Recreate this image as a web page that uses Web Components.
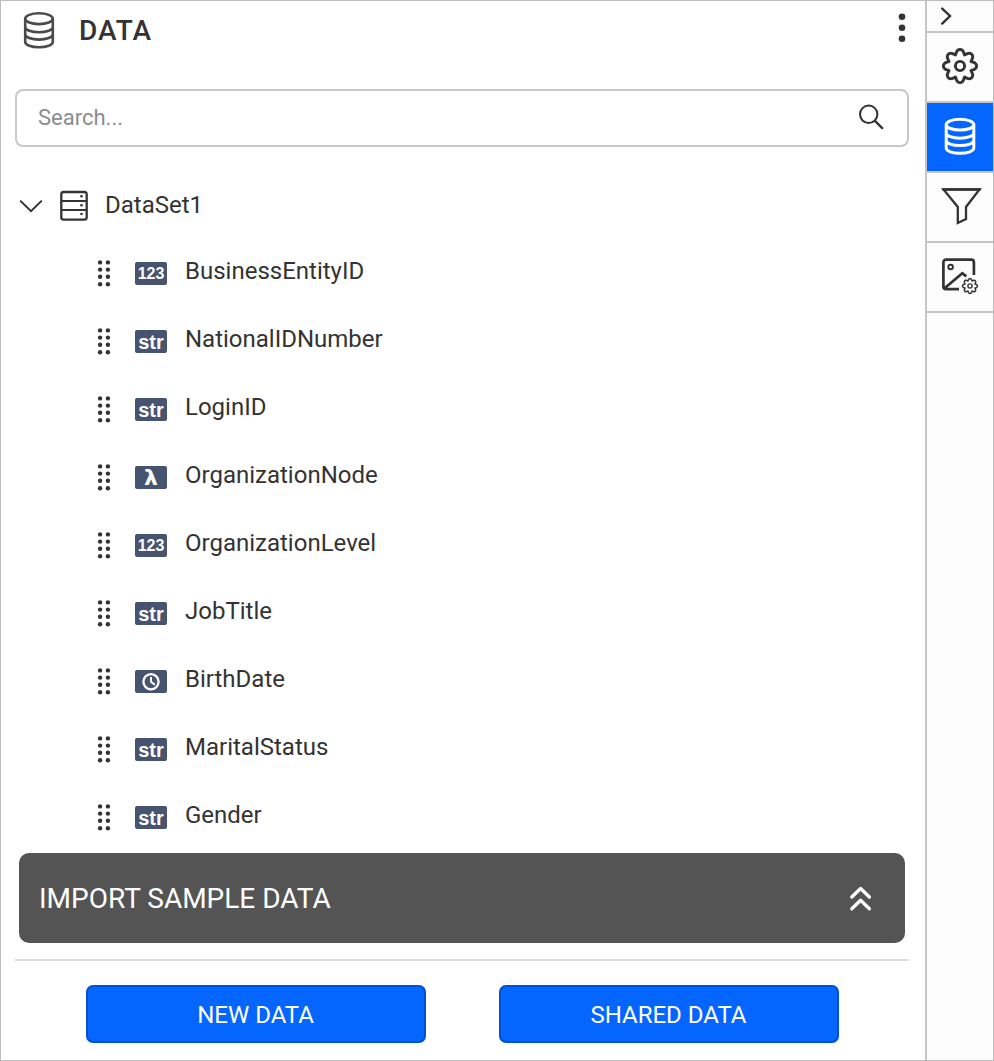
<!DOCTYPE html>
<html lang="en">
<head>
<meta charset="utf-8">
<meta name="viewport" content="width=device-width, initial-scale=1">
<title>Data</title>
<style>
  body { margin: 0; font-family: Roboto, "Liberation Sans", sans-serif; color: #333; background: #fff; }
</style>
</head>
<body>
<report-designer>
  <data-panel slot="panel">
    <panel-header>DATA</panel-header>
    <search-box placeholder="Search..."></search-box>
    <data-set name="DataSet1">
      <data-field type="number">BusinessEntityID</data-field>
      <data-field type="string">NationalIDNumber</data-field>
      <data-field type="string">LoginID</data-field>
      <data-field type="expression">OrganizationNode</data-field>
      <data-field type="number">OrganizationLevel</data-field>
      <data-field type="string">JobTitle</data-field>
      <data-field type="date">BirthDate</data-field>
      <data-field type="string">MaritalStatus</data-field>
      <data-field type="string">Gender</data-field>
    </data-set>
    <import-bar slot="footer">IMPORT SAMPLE DATA</import-bar>
    <action-bar slot="footer">
      <action-button>NEW DATA</action-button>
      <action-button>SHARED DATA</action-button>
    </action-bar>
  </data-panel>
  <tool-rail slot="rail">
    <rail-button compact icon="collapse" label="Collapse panel"></rail-button>
    <rail-button icon="gear" label="Properties"></rail-button>
    <rail-button icon="database" label="Data" active></rail-button>
    <rail-button icon="filter" label="Filters"></rail-button>
    <rail-button icon="image" label="Image manager"></rail-button>
  </tool-rail>
</report-designer>

<script>
  // Closed outline of an eight-lobed cog, centred on (cx, cy).
  function cog(cx, cy, radius, depth) {
    const points = [];
    for (let i = 0; i < 128; i++) {
      const t = (i / 128) * Math.PI * 2;
      const r = radius + depth * Math.cos(8 * t);
      const a = t + 0.055 * Math.sin(8 * t);
      points.push((cx + r * Math.sin(a)).toFixed(2) + ' ' + (cy - r * Math.cos(a)).toFixed(2));
    }
    return 'M' + points.join('L') + 'Z';
  }

  const database = (width) => `<svg width="40" height="40" viewBox="0 0 40 40" fill="none" stroke="currentColor" stroke-width="${width}" aria-hidden="true">
    <ellipse cx="20" cy="7.7" rx="13.8" ry="5.4"/>
    <path d="M6.2 7.7v23.4c0 3 6.2 5.2 13.8 5.2s13.8-2.2 13.8-5.2V7.7M6.2 15.9c0 3 6.2 5.4 13.8 5.4s13.8-2.4 13.8-5.4M6.2 23.2c0 3 6.2 5.4 13.8 5.4s13.8-2.4 13.8-5.4"/></svg>`;

  const icons = {
    database,
    collapse: `<svg width="40" height="30" viewBox="0 0 40 30" fill="none" stroke="currentColor" stroke-width="2.4" stroke-linecap="round" aria-hidden="true"><path d="M2.2 7.6 10 15l-7.8 7.6"/></svg>`,
    gear: `<svg width="40" height="40" viewBox="0 0 40 40" fill="none" stroke="currentColor" stroke-width="2.9" aria-hidden="true"><path d="${cog(20, 19, 14.3, 2.3)}"/><circle cx="20" cy="19" r="4.6"/></svg>`,
    filter: `<svg width="40" height="40" viewBox="0 0 40 40" fill="none" stroke="currentColor" stroke-width="2.3" aria-hidden="true"><path d="M3.5 2.5h36L26 20v12l-8.2 4V20Z"/><path d="M2 2.3h39"/></svg>`,
    image: `<svg width="40" height="40" viewBox="0 0 40 40" fill="none" stroke="currentColor" stroke-width="2.7" aria-hidden="true"><path d="M33.9 18V5.2a2.6 2.6 0 0 0-2.6-2.6H6a2.6 2.6 0 0 0-2.6 2.6v24.4A2.6 2.6 0 0 0 6 32.2h13M4 31.8l18.3-15.6 4 3.2"/><circle cx="10.6" cy="10" r="2.3" stroke-width="1.9"/><path stroke-width="1.5" d="${cog(30, 29, 6.4, 1)}"/><circle cx="30" cy="29" r="2.1" stroke-width="1.4"/></svg>`,
    more: `<svg width="8" height="32" viewBox="0 0 8 32" fill="currentColor" aria-hidden="true"><circle cx="4" cy="4.8" r="3.3"/><circle cx="4" cy="15.8" r="3.3"/><circle cx="4" cy="26.8" r="3.3"/></svg>`,
    search: `<svg width="26" height="26" viewBox="0 0 26 26" fill="none" stroke="currentColor" stroke-width="2" aria-hidden="true"><circle cx="10.7" cy="9.3" r="8.7"/><path stroke-linecap="round" stroke-width="2.3" d="m17.2 16.1 7 7"/></svg>`,
    expanded: `<svg width="24" height="16" viewBox="0 0 24 16" fill="none" stroke="currentColor" stroke-width="2" aria-hidden="true"><path d="m1.2 3.6 10.8 10.6L22.8 3.6"/></svg>`,
    table: `<svg width="28" height="30" viewBox="0 0 28 30" fill="none" stroke="currentColor" stroke-width="2.3" aria-hidden="true"><rect x="1.3" y="2" width="25.4" height="27.6" rx="2.4"/><path stroke-width="2.2" d="M1 11h26M1 20h26"/><g fill="currentColor" stroke="none"><circle cx="21.5" cy="6.2" r="1.3"/><circle cx="21.5" cy="15.2" r="1.3"/><circle cx="21.5" cy="24" r="1.3"/></g></svg>`,
    grip: `<svg width="14" height="28" viewBox="0 0 14 28" fill="currentColor" aria-hidden="true">${[2.4, 9.6, 16.8, 24.3].map(y => `<circle cx="3.1" cy="${y}" r="2.2"/><circle cx="10.9" cy="${y}" r="2.2"/>`).join('')}</svg>`,
    clock: `<svg width="32" height="23" viewBox="0 0 32 23" fill="none" stroke="currentColor" stroke-width="2.3" aria-label="date"><circle cx="16" cy="11.8" r="7.6"/><path stroke-width="2" d="M16 7v4.8l3.8 2.8"/></svg>`,
    up: `<svg width="24" height="28" viewBox="0 0 24 28" fill="none" stroke="currentColor" stroke-width="3.3" stroke-linecap="round" stroke-linejoin="round" aria-hidden="true"><path d="m2.8 13 8.8-8.5 8.8 8.5M2.8 24.8l8.8-8.5 8.8 8.5"/></svg>`
  };

  class Part extends HTMLElement {
    connectedCallback() {
      if (this.shadowRoot) return;
      this.attachShadow({ mode: 'open' }).innerHTML =
        `<style>*{box-sizing:border-box}:host{box-sizing:border-box}svg{display:block;flex:none;overflow:visible}button{font:inherit;color:inherit;cursor:pointer}</style>` + this.render();
    }
  }

  customElements.define('report-designer', class extends Part {
    render() {
      return `<style>
        :host { display: grid; grid-template-columns: 1fr auto; min-height: 100vh; border: 1px solid #bdbdbd; }
      </style><slot name="panel"></slot><slot name="rail"></slot>`;
    }
  });

  customElements.define('data-panel', class extends Part {
    render() {
      return `<style>
        :host { display: flex; flex-direction: column; padding: 0 16px 17px 14px; }
        main { flex: 1; }
      </style><main><slot></slot></main><footer><slot name="footer"></slot></footer>`;
    }
  });

  customElements.define('panel-header', class extends Part {
    render() {
      return `<style>
        :host { display: flex; align-items: center; height: 60px; padding: 0 3px 0 4px; }
        h1 { flex: 1; margin: 0 0 0 20px; font-size: 28px; font-weight: 500; line-height: 32px; letter-spacing: 1px; }
        .mark { color: #4a4a4a; }
        button { border: 0; padding: 0; background: none; margin-bottom: 6px; }
      </style><span class="mark">${icons.database(2.6)}</span><h1><slot></slot></h1>
      <button type="button" aria-label="More options">${icons.more}</button>`;
    }
  });

  customElements.define('search-box', class extends Part {
    render() {
      return `<style>
        :host { display: block; margin: 28px 0 26px; }
        form { display: flex; align-items: center; height: 58px; border: 2px solid #c8c8c8; border-radius: 8px; padding: 0 23px 0 21px; }
        input { flex: 1; min-width: 0; border: 0; outline: 0; padding: 0; background: none; font: inherit; font-size: 22px; line-height: 26px; color: #333; }
        input::placeholder { color: #8c8c8c; opacity: 1; }
        button { border: 0; padding: 0; background: none; }
      </style><form role="search"><input type="text" aria-label="Search data" placeholder="${this.getAttribute('placeholder')}">
      <button type="button" aria-label="Search">${icons.search}</button></form>`;
    }
  });

  customElements.define('data-set', class extends Part {
    render() {
      return `<style>
        :host { display: block; }
        button { display: flex; align-items: center; width: 100%; height: 64px; border: 0; padding: 0 4px; background: none; font-size: 24px; line-height: 28px; text-align: left; }
        .name, .table { margin-left: 17px; }
      </style><button type="button" aria-expanded="true">${icons.expanded}<span class="table">${icons.table}</span><span class="name">${this.getAttribute('name')}</span></button>
      <div role="list"><slot></slot></div>`;
    }
  });

  const badges = {
    number: '<span class="digits">123</span>',
    string: '<span class="word">str</span>',
    expression: '<span class="lambda">λ</span>',
    date: icons.clock
  };

  customElements.define('data-field', class extends Part {
    render() {
      this.setAttribute('role', 'listitem');
      return `<style>
        :host { display: flex; align-items: center; height: 68px; padding-left: 82px; font-size: 24px; line-height: 28px; }
        .icons { display: flex; align-items: center; gap: 24px; margin-right: 18px; padding-top: 5px; }
        .badge { display: flex; justify-content: center; width: 32px; height: 23px; border-radius: 2px; background: #46546f; color: #fff; font-family: "Liberation Sans", sans-serif; font-weight: 700; }
        .digits { font-size: 16px; line-height: 24px; }
        .word { font-size: 20px; line-height: 24px; }
        .lambda { font-family: "DejaVu Sans", sans-serif; font-size: 22px; line-height: 24px; }
      </style><span class="icons">${icons.grip}<span class="badge">${badges[this.getAttribute('type')]}</span></span><slot></slot>`;
    }
  });

  customElements.define('import-bar', class extends Part {
    render() {
      return `<style>
        :host { display: block; padding: 0 4px; }
        button { display: flex; align-items: center; justify-content: space-between; width: 100%; height: 90px; border: 0; border-radius: 10px; padding: 2px 32px 0 20px; background: #545454; color: #fff; font-size: 28px; line-height: 32px; }
        svg { margin-bottom: 2px; }
      </style><button type="button"><span><slot></slot></span>${icons.up}</button>`;
    }
  });

  customElements.define('action-bar', class extends Part {
    render() {
      return `<style>
        :host { display: flex; justify-content: center; gap: 73px; margin-top: 16px; border-top: 2px solid #dcdcdc; padding-top: 24px; }
      </style><slot></slot>`;
    }
  });

  customElements.define('action-button', class extends Part {
    render() {
      return `<style>
        :host { display: block; flex: 0 1 340px; }
        button { width: 100%; height: 58px; border: 2px solid #0050d4; border-radius: 7px; background: #0565ff; color: #fff; font-size: 24px; line-height: 28px; padding: 2px 0 0; }
      </style><button type="button"><slot></slot></button>`;
    }
  });

  customElements.define('tool-rail', class extends Part {
    render() {
      return `<style>
        :host { display: flex; flex-direction: column; width: 68px; border-left: 2px solid #c6c6c6; background: #fcfcfc; }
      </style><slot></slot>`;
    }
  });

  customElements.define('rail-button', class extends Part {
    render() {
      const name = this.getAttribute('icon');
      const art = name === 'database' ? icons.database(3) : icons[name];
      return `<style>
        :host { display: block; height: 70px; border-bottom: 2px solid #c6c6c6; }
        :host([compact]) { height: 32px; }
        :host([active]) { background: #0565ff; color: #fff; }
        button { display: flex; align-items: center; justify-content: center; width: 100%; height: 100%; border: 0; padding: 0; background: none; }
      </style><button type="button" aria-label="${this.getAttribute('label')}">${art}</button>`;
    }
  });
</script>
</body>
</html>
